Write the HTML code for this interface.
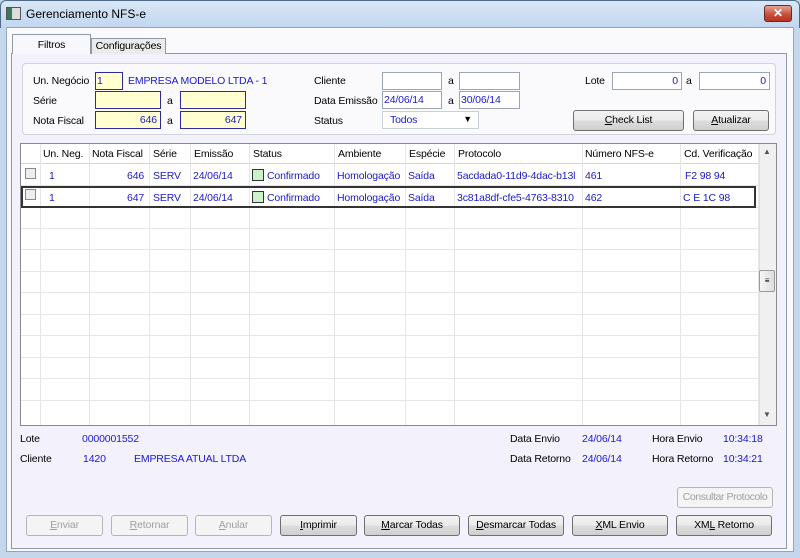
<!DOCTYPE html>
<html><head><meta charset="utf-8"><style>
*{box-sizing:border-box;margin:0;padding:0}
body{width:800px;height:558px;overflow:hidden;font-family:"Liberation Sans",Tahoma,sans-serif;font-size:10.5px;letter-spacing:-0.15px;color:#000;background:#c4d7ec;position:relative}
.a{position:absolute;white-space:nowrap}
.title{left:0;top:0;width:800px;height:28px;background:linear-gradient(#d9e7f6,#c1d6ee);border:1px solid #4f6b88;border-bottom:none;border-radius:6px 6px 0 0}
.client{left:6px;top:27px;width:788px;height:525px;background:#fafafc;border:1px solid #8fa6bf}
.page{left:11px;top:53px;width:776px;height:496px;background:#f3f1fb;border:1px solid #8e9aa8}
.tab{background:#fafafc;border:1px solid #8e9aa8;border-bottom:none;text-align:center}
.grp{left:22px;top:63px;width:754px;height:72px;background:#fafafd;border:1px solid #d0d4dc;border-radius:4px}
.in{background:#fff;border:1px solid #9aa6b6;height:18px;color:#1a1acc;padding:2px 3px;text-align:right}
.y{background:#ffffd0;border:1px solid #2b2b9c}
.b{color:#1a1acc}
.btn{height:21px;border:1px solid #707070;border-radius:3px;background:linear-gradient(#f2f2f2 0,#ebebeb 50%,#dddddd 51%,#cfcfcf);text-align:center;line-height:19px;overflow:hidden}
.dis{color:#a0a0a0;border-color:#b5b5b5;background:#f4f4f4}
u{text-decoration:underline}
.grid{left:20px;top:143px;width:757px;height:283px;background:#fff;border:1px solid #8a8a8a}
.vl{position:absolute;top:0;width:1px;height:281px;background:#e6e6e6}
.hl{position:absolute;left:0;width:738px;height:1px;background:#e6e6e6}
.c{position:absolute;white-space:nowrap}
</style></head><body>
<div class="a title"></div>
<div class="a" style="left:6px;top:7px;width:15px;height:13px;border:1px solid #555;background:linear-gradient(90deg,#3a7a5a 40%,#ddd 40%)"></div>
<div class="a" style="left:26px;top:7px;font-size:12px;letter-spacing:0;color:#000">Gerenciamento NFS-e</div>
<div class="a" style="left:764px;top:5px;width:28px;height:17px;border:1px solid #6e2a22;border-radius:3px;background:linear-gradient(#e8a393,#c8513c 55%,#b8321f);color:#fff;font-weight:bold;text-align:center;line-height:15px;font-size:12px">✕</div>
<div class="a client"></div>
<div class="a page"></div>
<div class="a tab" style="left:12px;top:34px;width:79px;height:20px;line-height:20px;background:#f8f7fc">Filtros</div>
<div class="a tab" style="left:91px;top:38px;width:75px;height:16px;line-height:15px;background:#ebebeb">Configurações</div>
<div class="a grp"></div>
<div class="a" style="left:33px;top:75px">Un. Negócio</div>
<div class="a y in" style="left:95px;top:72px;width:28px;text-align:left;padding-left:1px">1</div>
<div class="a b" style="left:128px;top:75px">EMPRESA MODELO LTDA - 1</div>
<div class="a" style="left:33px;top:95px">Série</div>
<div class="a y in" style="left:95px;top:91px;width:66px"></div>
<div class="a" style="left:167px;top:95px">a</div>
<div class="a y in" style="left:180px;top:91px;width:66px"></div>
<div class="a" style="left:33px;top:115px">Nota Fiscal</div>
<div class="a y in" style="left:95px;top:111px;width:66px">646</div>
<div class="a" style="left:167px;top:115px">a</div>
<div class="a y in" style="left:180px;top:111px;width:66px">647</div>
<div class="a" style="left:314px;top:75px">Cliente</div>
<div class="a in" style="left:382px;top:72px;width:60px"></div>
<div class="a" style="left:448px;top:75px">a</div>
<div class="a in" style="left:459px;top:72px;width:61px"></div>
<div class="a" style="left:314px;top:95px">Data Emissão</div>
<div class="a in" style="left:382px;top:91px;width:60px;text-align:left;padding-left:1px">24/06/14</div>
<div class="a" style="left:448px;top:95px">a</div>
<div class="a in" style="left:459px;top:91px;width:61px;text-align:left;padding-left:1px">30/06/14</div>
<div class="a" style="left:314px;top:115px">Status</div>
<div class="a in" style="left:382px;top:111px;width:97px;text-align:left;padding-left:7px;border-color:#c9cfd8">Todos<span style="position:absolute;right:6px;top:2px;color:#000;font-size:9px">▼</span></div>
<div class="a" style="left:585px;top:75px">Lote</div>
<div class="a in" style="left:612px;top:72px;width:70px">0</div>
<div class="a" style="left:686px;top:75px">a</div>
<div class="a in" style="left:699px;top:72px;width:71px">0</div>
<div class="a btn" style="left:573px;top:110px;width:111px"><u>C</u>heck List</div>
<div class="a btn" style="left:693px;top:110px;width:76px"><u>A</u>tualizar</div>

<div class="a grid">
<div style="position:absolute;left:0;top:0;width:738px;height:20px;border-bottom:1px solid #d5d5d5"></div>
<div class="vl" style="left:19px"></div><div class="vl" style="left:68px"></div><div class="vl" style="left:128px"></div><div class="vl" style="left:169px"></div><div class="vl" style="left:228px"></div><div class="vl" style="left:313px"></div><div class="vl" style="left:384px"></div><div class="vl" style="left:433px"></div><div class="vl" style="left:561px"></div><div class="vl" style="left:659px"></div><div class="vl" style="left:737px"></div>
<div class="hl" style="top:41px"></div><div class="hl" style="top:63px"></div><div class="hl" style="top:84px"></div><div class="hl" style="top:105px"></div><div class="hl" style="top:127px"></div><div class="hl" style="top:148px"></div><div class="hl" style="top:170px"></div><div class="hl" style="top:191px"></div><div class="hl" style="top:213px"></div><div class="hl" style="top:234px"></div><div class="hl" style="top:256px"></div>
<div class="c" style="left:22px;top:4px">Un. Neg.</div><div class="c" style="left:71px;top:4px">Nota Fiscal</div><div class="c" style="left:132px;top:4px">Série</div><div class="c" style="left:173px;top:4px">Emissão</div><div class="c" style="left:232px;top:4px">Status</div><div class="c" style="left:317px;top:4px">Ambiente</div><div class="c" style="left:388px;top:4px">Espécie</div><div class="c" style="left:437px;top:4px">Protocolo</div><div class="c" style="left:564px;top:4px">Número NFS-e</div><div class="c" style="left:663px;top:4px">Cd. Verificação</div>
<div style="position:absolute;left:0;top:42px;width:735px;height:22px;border:2px solid #333"></div>
<div class="c" style="left:4px;top:24px;width:11px;height:11px;border:1px solid #8a8a8a;background:#eee"></div>
<div class="c" style="left:4px;top:45px;width:11px;height:11px;border:1px solid #8a8a8a;background:#eee"></div>
<div class="c b" style="left:28px;top:26px">1</div><div class="c b" style="left:28px;top:48px">1</div>
<div class="c b" style="left:106px;top:26px">646</div><div class="c b" style="left:106px;top:48px">647</div>
<div class="c b" style="left:132px;top:26px">SERV</div><div class="c b" style="left:132px;top:48px">SERV</div>
<div class="c b" style="left:172px;top:26px">24/06/14</div><div class="c b" style="left:172px;top:48px">24/06/14</div>
<div class="c" style="left:231px;top:25px;width:12px;height:12px;border:1px solid #333;background:#ccf2cc"></div><div class="c" style="left:231px;top:47px;width:12px;height:12px;border:1px solid #333;background:#ccf2cc"></div>
<div class="c b" style="left:246px;top:26px">Confirmado</div><div class="c b" style="left:246px;top:48px">Confirmado</div>
<div class="c b" style="left:316px;top:26px">Homologação</div><div class="c b" style="left:316px;top:48px">Homologação</div>
<div class="c b" style="left:387px;top:26px">Saída</div><div class="c b" style="left:387px;top:48px">Saída</div>
<div class="c b" style="left:436px;top:26px;width:124px;overflow:hidden">5acdada0-11d9-4dac-b13l</div><div class="c b" style="left:436px;top:48px;width:124px;overflow:hidden">3c81a8df-cfe5-4763-8310</div>
<div class="c b" style="left:564px;top:26px">461</div><div class="c b" style="left:564px;top:48px">462</div>
<div class="c b" style="left:664px;top:26px">F2 98 94</div><div class="c b" style="left:662px;top:48px">C E 1C 98</div>
<div style="position:absolute;left:738px;top:0;width:17px;height:281px;background:#f0f0f0;border-left:1px solid #e0e0e0"></div>
<div class="c" style="left:742px;top:3px;font-size:8px;color:#555">▲</div>
<div class="c" style="left:742px;top:266px;font-size:8px;color:#555">▼</div>
<div style="position:absolute;left:738px;top:126px;width:16px;height:22px;border:1px solid #999;border-radius:2px;background:linear-gradient(90deg,#f6f6f6,#dcdcdc);text-align:center;font-size:8px;line-height:20px">≡</div>
</div>

<div class="a" style="left:20px;top:433px">Lote</div>
<div class="a b" style="left:82px;top:433px">0000001552</div>
<div class="a" style="left:20px;top:453px">Cliente</div>
<div class="a b" style="left:83px;top:453px">1420</div>
<div class="a b" style="left:134px;top:453px">EMPRESA ATUAL LTDA</div>
<div class="a" style="left:510px;top:433px">Data Envio</div>
<div class="a b" style="left:582px;top:433px">24/06/14</div>
<div class="a" style="left:652px;top:433px">Hora Envio</div>
<div class="a b" style="left:723px;top:433px">10:34:18</div>
<div class="a" style="left:510px;top:453px">Data Retorno</div>
<div class="a b" style="left:582px;top:453px">24/06/14</div>
<div class="a" style="left:652px;top:453px">Hora Retorno</div>
<div class="a b" style="left:723px;top:453px">10:34:21</div>
<div class="a btn dis" style="left:677px;top:487px;width:96px;letter-spacing:-0.4px">Consultar Protocolo</div>
<div class="a btn dis" style="left:26px;top:515px;width:77px"><u>E</u>nviar</div>
<div class="a btn dis" style="left:111px;top:515px;width:77px"><u>R</u>etornar</div>
<div class="a btn dis" style="left:195px;top:515px;width:77px"><u>A</u>nular</div>
<div class="a btn" style="left:280px;top:515px;width:77px"><u>I</u>mprimir</div>
<div class="a btn" style="left:364px;top:515px;width:96px"><u>M</u>arcar Todas</div>
<div class="a btn" style="left:468px;top:515px;width:96px"><u>D</u>esmarcar Todas</div>
<div class="a btn" style="left:572px;top:515px;width:96px"><u>X</u>ML Envio</div>
<div class="a btn" style="left:676px;top:515px;width:96px">XM<u>L</u> Retorno</div>
</body></html>
